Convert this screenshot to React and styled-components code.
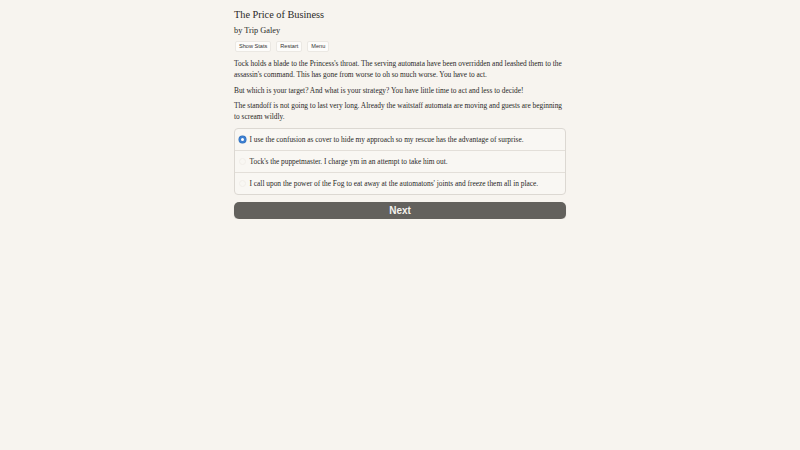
import React, { useState } from "react";
import styled, { createGlobalStyle } from "styled-components";

const Global = createGlobalStyle`
  html, body { margin: 0; padding: 0; background: #f7f4ef; }
  body { font-family: "Liberation Serif", "DejaVu Serif", serif; color: #2a2927; }
`;

const Page = styled.div`
  width: 332px;
  margin: 0 auto;
  padding-top: 8px;
  display: flex;
  flex-direction: column;
`;

const Title = styled.h1`
  margin: 0;
  font-size: 10.3px;
  font-weight: normal;
  line-height: 14px;
  color: #2a2927;
`;

const Author = styled.div`
  margin-top: 3px;
  font-size: 8.3px;
  line-height: 12px;
`;

const ButtonRow = styled.div`
  display: flex;
  gap: 5px;
  margin-top: 4px;
  margin-left: 1px;
`;

const SmallButton = styled.button`
  font-family: "Liberation Sans", Arial, sans-serif;
  font-size: 5.6px;
  line-height: 7px;
  padding: 1px 3px;
  border: 1px solid #ebe8e3;
  border-radius: 2px;
  background: #fdfcfa;
  color: #333;
  cursor: pointer;
`;

const Paragraph = styled.p`
  margin: ${(p) => (p.$first ? "6px" : "4.5px")} 0 0 0;
  font-size: 7.38px;
  line-height: 11px;
`;

const ChoiceBox = styled.div`
  margin-top: 6px;
  border: 1px solid #dcd8d2;
  border-radius: 4px;
  background: #f9f7f3;
  display: flex;
  flex-direction: column;
  overflow: hidden;
`;

const ChoiceRow = styled.label`
  display: flex;
  align-items: center;
  height: 21px;
  padding-left: 4px;
  font-size: 7.38px;
  border-top: ${(p) => (p.$first ? "none" : "1px solid #e3dfd9")};
  cursor: pointer;
`;

const Radio = styled.span`
  width: 7px;
  height: 7px;
  border-radius: 50%;
  box-sizing: border-box;
  margin-right: 3.5px;
  flex: none;
  background: ${(p) => (p.$on ? "#ffffff" : "transparent")};
  border: ${(p) => (p.$on ? "2px solid #3d7fd0" : "1px solid #f1eee9")};
  ${(p) => (p.$on ? "box-shadow: 0 0 0 0.5px #2f6db8;" : "")}
`;

const NextButton = styled.button`
  margin-top: 7px;
  height: 17px;
  border: none;
  border-radius: 5px;
  background: #63615d;
  color: #f4f2ee;
  font-family: "Liberation Sans", Arial, sans-serif;
  font-weight: bold;
  font-size: 10px;
  cursor: pointer;
  box-shadow: 0 1px 1px rgba(0,0,0,0.15);
`;

const choices = [
  "I use the confusion as cover to hide my approach so my rescue has the advantage of surprise.",
  "Tock's the puppetmaster. I charge ym in an attempt to take him out.",
  "I call upon the power of the Fog to eat away at the automatons' joints and freeze them all in place.",
];

export default function App() {
  const [sel, setSel] = useState(0);
  return (
    <>
      <Global />
      <Page>
        <Title>The Price of Business</Title>
        <Author>by Trip Galey</Author>
        <ButtonRow>
          <SmallButton>Show Stats</SmallButton>
          <SmallButton>Restart</SmallButton>
          <SmallButton>Menu</SmallButton>
        </ButtonRow>
        <Paragraph $first>
          Tock holds a blade to the Princess's throat. The serving automata have been overridden and leashed them to the assassin's command. This has gone from worse to oh so much worse. You have to act.
        </Paragraph>
        <Paragraph>
          But which is your target? And what is your strategy? You have little time to act and less to decide!
        </Paragraph>
        <Paragraph>
          The standoff is not going to last very long. Already the waitstaff automata are moving and guests are beginning to scream wildly.
        </Paragraph>
        <ChoiceBox>
          {choices.map((c, i) => (
            <ChoiceRow key={i} $first={i === 0} onClick={() => setSel(i)}>
              <Radio $on={sel === i} />
              <span>{c}</span>
            </ChoiceRow>
          ))}
        </ChoiceBox>
        <NextButton>Next</NextButton>
      </Page>
    </>
  );
}
